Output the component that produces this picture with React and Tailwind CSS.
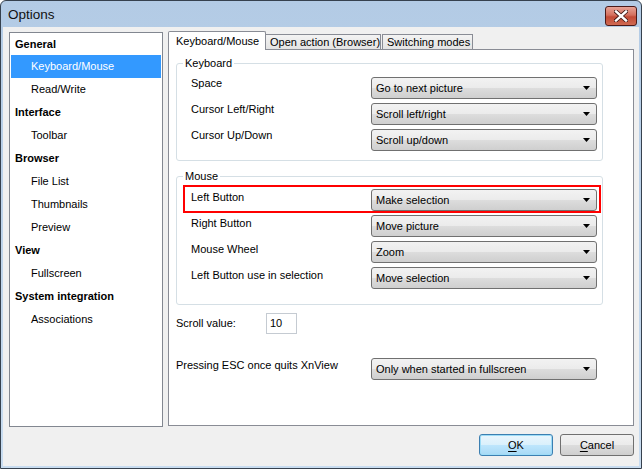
import React from "react";

const nav = [
  { label: "General", head: true },
  { label: "Keyboard/Mouse", selected: true },
  { label: "Read/Write" },
  { label: "Interface", head: true },
  { label: "Toolbar" },
  { label: "Browser", head: true },
  { label: "File List" },
  { label: "Thumbnails" },
  { label: "Preview" },
  { label: "View", head: true },
  { label: "Fullscreen" },
  { label: "System integration", head: true },
  { label: "Associations" },
];

const Combo = ({ value }) => (
  <div className="w-[226px] h-[22px] mt-[2px] flex items-center justify-between pl-[4px] pr-[6px] border border-[#707070] rounded-[3px] bg-[linear-gradient(to_bottom,#f2f2f2_0%,#ebebeb_50%,#dddddd_50%,#cfcfcf_100%)]">
    <span>{value}</span>
    <svg width="7" height="4" viewBox="0 0 7 4">
      <path d="M0 0h7L3.5 4z" fill="#000" />
    </svg>
  </div>
);

const Row = ({ label, value, highlight, low }) => (
  <div className="relative flex h-[26px]">
    {highlight && (
      <div className="absolute left-[-8px] top-[-2px] w-[418px] h-[28px] border-2 border-[#ff0000] pointer-events-none" />
    )}
    <div className={"w-[180px] leading-[15px] " + (low ? "pt-[3px]" : "pt-[1px]")}>{label}</div>
    <Combo value={value} />
  </div>
);

const Group = ({ title, className, children }) => (
  <fieldset className={"ml-[7px] w-[427px] border border-[#d5dfe5] rounded-[3px] pl-[14px] " + className}>
    <legend className="ml-[-8px] px-[2px] leading-[14px]">{title}</legend>
    {children}
  </fieldset>
);

export default function App() {
  return (
    <div className="w-[642px] h-[469px] flex flex-col border border-[#36414e] rounded-t-[6px] bg-[linear-gradient(to_bottom,#b3cbe5,#c8dcf0)] font-['Liberation_Sans',sans-serif] text-[11px] text-black">
      {/* title bar */}
      <div className="h-[26px] flex items-center justify-between pl-[7px] pr-[4px] shrink-0">
        <span className="text-[13.5px] text-[#111] mt-[2px]">Options</span>
        <div className="w-[32px] h-[20px] mt-[3px] flex items-center justify-center rounded-[3px] border border-[#4b1a18] bg-[linear-gradient(to_bottom,#e7a396_0%,#d4705e_45%,#c24a36_55%,#d06a52_100%)]">
          <svg width="14" height="12" viewBox="0 0 14 12">
            <path d="M2 1.5L12 10.5M12 1.5L2 10.5" stroke="#3b1512" strokeWidth="4" strokeLinecap="square" />
            <path d="M2 1.5L12 10.5M12 1.5L2 10.5" stroke="#fff" strokeWidth="2.4" strokeLinecap="square" />
          </svg>
        </div>
      </div>

      {/* body */}
      <div className="flex-1 mx-[2px] mb-[2px] bg-[#f0f0f0] pt-[5px] pl-[6px] pr-[4px] flex flex-col">
        <div className="flex items-start">
          {/* left tree */}
          <div className="w-[154px] h-[395px] bg-white border border-[#828790] px-[1px]">
            {nav.map((n, i) => (
              <div
                key={n.label}
                className={
                  "flex items-center whitespace-nowrap " +
                  (i === 0 ? "h-[22px] " : "h-[23px] ") +
                  (n.head ? "pl-[4px] font-bold " : "pl-[20px] ") +
                  (n.selected ? "bg-[#3399ff] text-white" : "")
                }
              >
                {n.label}
              </div>
            ))}
          </div>

          {/* tab control */}
          <div className="ml-[5px] mt-[-1px] w-[466px]">
            <div className="h-[18px] flex items-end whitespace-nowrap">
              <div className="relative z-10 w-[98px] h-[19px] mb-[-1px] bg-white border border-b-0 border-[#898c95] rounded-t-[2px] pl-[7px] pt-[2px] leading-[14px]">
                Keyboard/Mouse
              </div>
              <div className="w-[115px] h-[15px] border border-b-0 border-l-0 border-[#898c95] bg-[linear-gradient(to_bottom,#f3f3f3,#e3e3e3)] pl-[4px] leading-[14px]">
                Open action (Browser)
              </div>
              <div className="w-[91px] h-[15px] ml-[1px] border border-b-0 border-[#898c95] bg-[linear-gradient(to_bottom,#f3f3f3,#e3e3e3)] pl-[4px] leading-[14px]">
                Switching modes
              </div>
            </div>
            <div className="h-[377px] bg-white border border-[#898c95] pt-[6px]">
              <Group title="Keyboard" className="h-[105px] pt-[5px]">
                <Row label="Space" value="Go to next picture" />
                <Row label="Cursor Left/Right" value="Scroll left/right" />
                <Row label="Cursor Up/Down" value="Scroll up/down" />
              </Group>
              <Group title="Mouse" className="h-[136px] mt-[8px] pt-[4px]">
                <Row label="Left Button" value="Make selection" highlight low />
                <Row label="Right Button" value="Move picture" low />
                <Row label="Mouse Wheel" value="Zoom" low />
                <Row label="Left Button use in selection" value="Move selection" low />
              </Group>

              <div className="ml-[7px] mt-[8px] flex items-center">
                <div className="w-[90px]">Scroll value:</div>
                <div className="w-[31px] h-[21px] border border-[#c5cbd2] bg-white pl-[3px] flex items-center">10</div>
              </div>

              <div className="ml-[7px] mt-[22px] flex h-[26px]">
                <div className="w-[195px] leading-[15px] pt-[2px] whitespace-nowrap">Pressing ESC once quits XnView</div>
                <Combo value="Only when started in fullscreen" />
              </div>
            </div>
          </div>
        </div>

        {/* buttons */}
        <div className="mt-[7px] mr-[1px] flex justify-end gap-[7px]">
          <button className="w-[74px] h-[22px] rounded-[3px] border border-[#3c7fb1] bg-[linear-gradient(to_bottom,#eaf6fd_0%,#d9f0fc_50%,#bee6fd_50%,#a7d9f5_100%)] shadow-[inset_0_0_0_1px_#9ddcf7]">
            <span className="underline underline-offset-2">O</span>K
          </button>
          <button className="w-[74px] h-[22px] rounded-[3px] border border-[#707070] bg-[linear-gradient(to_bottom,#f2f2f2_0%,#ebebeb_50%,#dddddd_50%,#cfcfcf_100%)]">
            <span className="underline underline-offset-2">C</span>ancel
          </button>
        </div>
      </div>
    </div>
  );
}
